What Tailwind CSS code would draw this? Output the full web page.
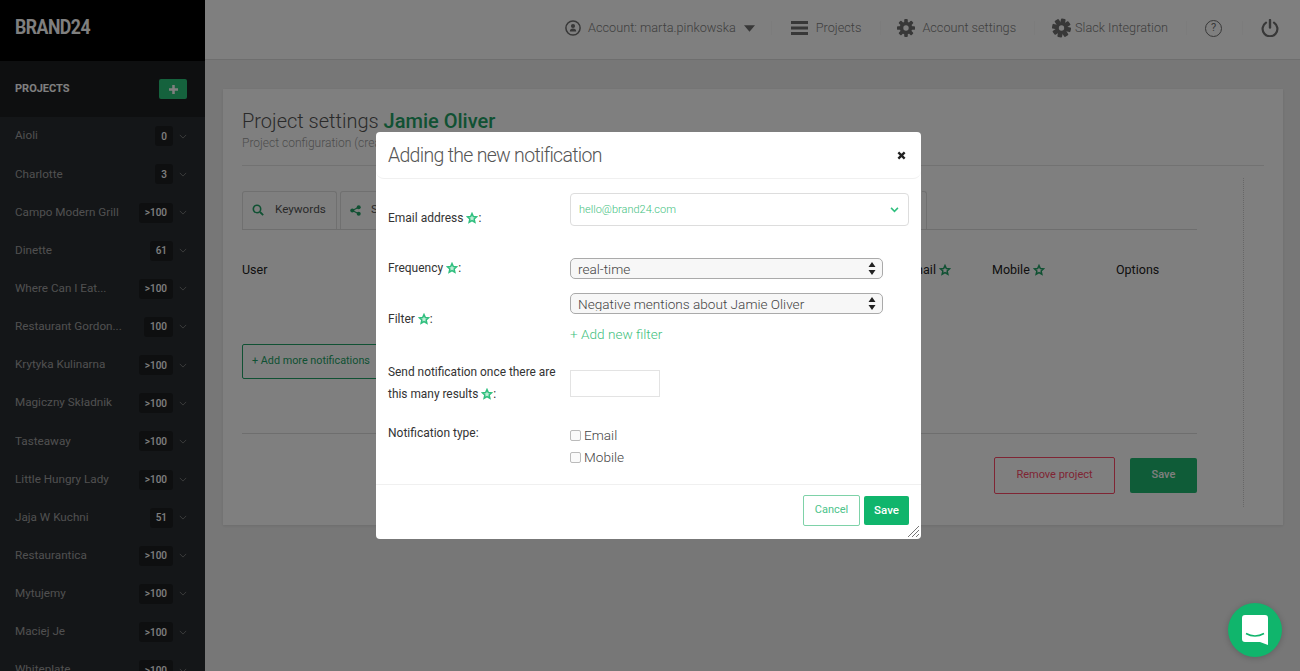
<!DOCTYPE html>
<html lang="en">
<head>
<meta charset="utf-8">
<title>Brand24</title>
<script src="https://cdn.jsdelivr.net/npm/@tailwindcss/browser@4"></script>
</head>
<body class="m-0 overflow-hidden">
<div class="relative flex h-[671px] w-[1300px] overflow-hidden bg-[#efefef] font-['Roboto','Liberation_Sans',sans-serif]">
  <!-- sidebar -->
  <aside class="flex h-full w-[205px] shrink-0 flex-col overflow-hidden bg-[#282c30]">
    <div class="flex h-[61px] shrink-0 items-center bg-black pl-[15px] pb-[5px]"><span class="inline-block origin-left scale-x-[0.84] text-[21px] font-bold tracking-[-0.6px] text-white">BRAND24</span></div>
    <div class="flex h-[56.2px] shrink-0 items-center justify-between bg-[#1c1e20] pl-[15px] pr-[18px]">
      <span class="text-[11px] font-bold text-white">PROJECTS</span>
      <span class="flex h-[20px] w-[28px] items-center justify-center rounded-[2px] bg-[#2bc47a]">
        <svg viewBox="0 0 10 10" class="h-[9px] w-[9px]"><path d="M3.6 0h2.8v3.6H10v2.8H6.4V10H3.6V6.4H0V3.6h3.6z" fill="#fff"/></svg>
      </span>
    </div>
    <ul class="m-0 list-none p-0 text-[11.7px] text-[#a0a0a0]">
      <li class="flex h-[38.15px] items-center pl-[15px] pr-[18px]"><span class="flex-1 truncate">Aioli</span><b class="flex h-[20px] min-w-[18px] items-center justify-center rounded-[3px] bg-[#1c1e20] px-[6px] text-[10px] font-medium text-white">0</b><svg viewBox="0 0 10 6" class="ml-[6px] h-[5px] w-[8px]"><path d="M1 1l4 4 4-4" fill="none" stroke="#888" stroke-width="1"/></svg></li>
      <li class="flex h-[38.15px] items-center pl-[15px] pr-[18px]"><span class="flex-1 truncate">Charlotte</span><b class="flex h-[20px] min-w-[18px] items-center justify-center rounded-[3px] bg-[#1c1e20] px-[6px] text-[10px] font-medium text-white">3</b><svg viewBox="0 0 10 6" class="ml-[6px] h-[5px] w-[8px]"><path d="M1 1l4 4 4-4" fill="none" stroke="#888" stroke-width="1"/></svg></li>
      <li class="flex h-[38.15px] items-center pl-[15px] pr-[18px]"><span class="flex-1 truncate">Campo Modern Grill</span><b class="flex h-[20px] min-w-[18px] items-center justify-center rounded-[3px] bg-[#1c1e20] px-[6px] text-[10px] font-medium text-white">&gt;100</b><svg viewBox="0 0 10 6" class="ml-[6px] h-[5px] w-[8px]"><path d="M1 1l4 4 4-4" fill="none" stroke="#888" stroke-width="1"/></svg></li>
      <li class="flex h-[38.15px] items-center pl-[15px] pr-[18px]"><span class="flex-1 truncate">Dinette</span><b class="flex h-[20px] min-w-[18px] items-center justify-center rounded-[3px] bg-[#1c1e20] px-[6px] text-[10px] font-medium text-white">61</b><svg viewBox="0 0 10 6" class="ml-[6px] h-[5px] w-[8px]"><path d="M1 1l4 4 4-4" fill="none" stroke="#888" stroke-width="1"/></svg></li>
      <li class="flex h-[38.15px] items-center pl-[15px] pr-[18px]"><span class="flex-1 truncate">Where Can I Eat...</span><b class="flex h-[20px] min-w-[18px] items-center justify-center rounded-[3px] bg-[#1c1e20] px-[6px] text-[10px] font-medium text-white">&gt;100</b><svg viewBox="0 0 10 6" class="ml-[6px] h-[5px] w-[8px]"><path d="M1 1l4 4 4-4" fill="none" stroke="#888" stroke-width="1"/></svg></li>
      <li class="flex h-[38.15px] items-center pl-[15px] pr-[18px]"><span class="flex-1 truncate">Restaurant Gordon...</span><b class="flex h-[20px] min-w-[18px] items-center justify-center rounded-[3px] bg-[#1c1e20] px-[6px] text-[10px] font-medium text-white">100</b><svg viewBox="0 0 10 6" class="ml-[6px] h-[5px] w-[8px]"><path d="M1 1l4 4 4-4" fill="none" stroke="#888" stroke-width="1"/></svg></li>
      <li class="flex h-[38.15px] items-center pl-[15px] pr-[18px]"><span class="flex-1 truncate">Krytyka Kulinarna</span><b class="flex h-[20px] min-w-[18px] items-center justify-center rounded-[3px] bg-[#1c1e20] px-[6px] text-[10px] font-medium text-white">&gt;100</b><svg viewBox="0 0 10 6" class="ml-[6px] h-[5px] w-[8px]"><path d="M1 1l4 4 4-4" fill="none" stroke="#888" stroke-width="1"/></svg></li>
      <li class="flex h-[38.15px] items-center pl-[15px] pr-[18px]"><span class="flex-1 truncate">Magiczny Składnik</span><b class="flex h-[20px] min-w-[18px] items-center justify-center rounded-[3px] bg-[#1c1e20] px-[6px] text-[10px] font-medium text-white">&gt;100</b><svg viewBox="0 0 10 6" class="ml-[6px] h-[5px] w-[8px]"><path d="M1 1l4 4 4-4" fill="none" stroke="#888" stroke-width="1"/></svg></li>
      <li class="flex h-[38.15px] items-center pl-[15px] pr-[18px]"><span class="flex-1 truncate">Tasteaway</span><b class="flex h-[20px] min-w-[18px] items-center justify-center rounded-[3px] bg-[#1c1e20] px-[6px] text-[10px] font-medium text-white">&gt;100</b><svg viewBox="0 0 10 6" class="ml-[6px] h-[5px] w-[8px]"><path d="M1 1l4 4 4-4" fill="none" stroke="#888" stroke-width="1"/></svg></li>
      <li class="flex h-[38.15px] items-center pl-[15px] pr-[18px]"><span class="flex-1 truncate">Little Hungry Lady</span><b class="flex h-[20px] min-w-[18px] items-center justify-center rounded-[3px] bg-[#1c1e20] px-[6px] text-[10px] font-medium text-white">&gt;100</b><svg viewBox="0 0 10 6" class="ml-[6px] h-[5px] w-[8px]"><path d="M1 1l4 4 4-4" fill="none" stroke="#888" stroke-width="1"/></svg></li>
      <li class="flex h-[38.15px] items-center pl-[15px] pr-[18px]"><span class="flex-1 truncate">Jaja W Kuchni</span><b class="flex h-[20px] min-w-[18px] items-center justify-center rounded-[3px] bg-[#1c1e20] px-[6px] text-[10px] font-medium text-white">51</b><svg viewBox="0 0 10 6" class="ml-[6px] h-[5px] w-[8px]"><path d="M1 1l4 4 4-4" fill="none" stroke="#888" stroke-width="1"/></svg></li>
      <li class="flex h-[38.15px] items-center pl-[15px] pr-[18px]"><span class="flex-1 truncate">Restaurantica</span><b class="flex h-[20px] min-w-[18px] items-center justify-center rounded-[3px] bg-[#1c1e20] px-[6px] text-[10px] font-medium text-white">&gt;100</b><svg viewBox="0 0 10 6" class="ml-[6px] h-[5px] w-[8px]"><path d="M1 1l4 4 4-4" fill="none" stroke="#888" stroke-width="1"/></svg></li>
      <li class="flex h-[38.15px] items-center pl-[15px] pr-[18px]"><span class="flex-1 truncate">Mytujemy</span><b class="flex h-[20px] min-w-[18px] items-center justify-center rounded-[3px] bg-[#1c1e20] px-[6px] text-[10px] font-medium text-white">&gt;100</b><svg viewBox="0 0 10 6" class="ml-[6px] h-[5px] w-[8px]"><path d="M1 1l4 4 4-4" fill="none" stroke="#888" stroke-width="1"/></svg></li>
      <li class="flex h-[38.15px] items-center pl-[15px] pr-[18px]"><span class="flex-1 truncate">Maciej Je</span><b class="flex h-[20px] min-w-[18px] items-center justify-center rounded-[3px] bg-[#1c1e20] px-[6px] text-[10px] font-medium text-white">&gt;100</b><svg viewBox="0 0 10 6" class="ml-[6px] h-[5px] w-[8px]"><path d="M1 1l4 4 4-4" fill="none" stroke="#888" stroke-width="1"/></svg></li>
      <li class="flex h-[38.15px] items-center pl-[15px] pr-[18px]"><span class="flex-1 truncate">Whiteplate</span><b class="flex h-[20px] min-w-[18px] items-center justify-center rounded-[3px] bg-[#1c1e20] px-[6px] text-[10px] font-medium text-white">&gt;100</b><svg viewBox="0 0 10 6" class="ml-[6px] h-[5px] w-[8px]"><path d="M1 1l4 4 4-4" fill="none" stroke="#888" stroke-width="1"/></svg></li>
    </ul>
  </aside>

  <!-- main -->
  <div class="flex min-w-0 flex-1 flex-col">
    <header class="flex h-[60px] shrink-0 items-center justify-end border-b border-[#dcdcdc] bg-white pr-[21px] pb-[3px] text-[12.7px] font-light text-[#808080]">
      <svg viewBox="0 0 16 16" class="h-[16px] w-[16px] shrink-0"><circle cx="8" cy="8" r="7.1" fill="none" stroke="#707070" stroke-width="1.5"/><circle cx="8" cy="6" r="2.1" fill="#707070"/><path d="M4.8 11.6c0-2.200 1.200-3.200 3.200-3.200s3.200 1 3.200 3.200z" fill="#707070"/></svg>
      <span class="ml-[7px]">Account: marta.pinkowska</span>
      <svg viewBox="0 0 12 7" class="ml-[8px] h-[7px] w-[11px] shrink-0"><path d="M0 0h12L6 7z" fill="#707070"/></svg>
      <span class="ml-[16px] h-[14px] w-px bg-[#f8f8f8]"></span>
      <svg viewBox="0 0 17 14" class="ml-[19px] h-[14px] w-[17px] shrink-0"><path d="M0 0h17v3H0zM0 5.500h17v3H0zM0 11h17v3H0z" fill="#707070"/></svg>
      <span class="ml-[8px]">Projects</span>
      <span class="ml-[19px] h-[14px] w-px bg-[#f8f8f8]"></span>
      <svg viewBox="0 0 20 20" class="ml-[16px] h-[18px] w-[18px] shrink-0"><g fill="#707070"><rect x="8" y="0" width="4" height="20" rx="1"/><rect x="8" y="0" width="4" height="20" rx="1" transform="rotate(45 10 10)"/><rect x="8" y="0" width="4" height="20" rx="1" transform="rotate(90 10 10)"/><rect x="8" y="0" width="4" height="20" rx="1" transform="rotate(135 10 10)"/></g><circle cx="10" cy="10" r="5.500" fill="none" stroke="#707070" stroke-width="3"/><circle cx="10" cy="10" r="3" fill="#fff"/></svg>
      <span class="ml-[7px]">Account settings</span>
      <span class="ml-[18px] h-[14px] w-px bg-[#f8f8f8]"></span>
      <svg viewBox="0 0 20 20" class="ml-[17px] h-[20px] w-[19px] shrink-0"><g fill="#707070" transform="rotate(12 10 10)"><rect x="7.500" y="0" width="5" height="20" rx="1"/><rect x="7.500" y="0" width="5" height="20" rx="1" transform="rotate(45 10 10)"/><rect x="7.500" y="0" width="5" height="20" rx="1" transform="rotate(90 10 10)"/><rect x="7.500" y="0" width="5" height="20" rx="1" transform="rotate(135 10 10)"/></g><circle cx="10" cy="10" r="2.800" fill="#fff"/></svg>
      <span class="ml-[4px]">Slack Integration</span>
      <span class="ml-[18px] h-[14px] w-px bg-[#f8f8f8]"></span>
      <span class="ml-[18px] flex h-[17px] w-[17px] shrink-0 items-center justify-center rounded-full border-[1.5px] border-[#707070] text-[11px] font-normal text-[#707070]">?</span>
      <span class="ml-[20px] h-[14px] w-px bg-[#f8f8f8]"></span>
      <svg viewBox="0 0 18 18" class="ml-[18px] h-[18px] w-[18px] shrink-0"><path d="M5 3.600a7.400 7.400 0 1 0 8 0" fill="none" stroke="#707070" stroke-width="2.200" stroke-linecap="round"/><path d="M9 1v7.500" fill="none" stroke="#707070" stroke-width="2.400" stroke-linecap="round"/></svg>
    </header>

    <main class="flex-1 pt-[29px] pl-[18px] pr-[17px]">
      <section class="flex h-[436px] flex-col bg-white pl-[19px] pr-[19px] shadow-[0_1px_3px_rgba(0,0,0,0.1)]">
        <h1 class="m-0 mt-[19px] text-[20px] leading-[27px] font-light text-[#555]">Project settings <span class="font-medium text-[#21a366]">Jamie Oliver</span></h1>
        <p class="m-0 text-[12px] leading-[16px] font-light text-[#999]">Project configuration (created on Jamie Oliver)</p>
        <div class="mt-[14px] border-t border-[#e4e4e4]"></div>
        <div class="flex min-h-0 flex-1">
          <div class="w-[955px] shrink-0">
            <div class="mt-[25px] flex h-[39px] gap-[3px] border-b border-[#dcdcdc]">
              <div class="flex w-[95px] items-center gap-[11px] rounded-t-[3px] border border-b-0 border-[#e0e0e0] pb-[1px] pl-[9px] text-[11.700px] text-[#555]">
                <svg viewBox="0 0 12 12" class="h-[12px] w-[12px]"><circle cx="5" cy="5" r="3.700" fill="none" stroke="#21a366" stroke-width="1.600"/><path d="M8 8l3.200 3.200" stroke="#21a366" stroke-width="1.800"/></svg>
                Keywords
              </div>
              <div class="flex w-[120px] items-center gap-[10px] rounded-t-[3px] border border-b-0 border-[#e0e0e0] pb-[1px] pl-[9px] text-[11.700px] text-[#555]">
                <svg viewBox="0 0 12 12" class="h-[11px] w-[11px]"><circle cx="2.500" cy="6" r="2.200" fill="#21a366"/><circle cx="9.500" cy="2.500" r="2.200" fill="#21a366"/><circle cx="9.500" cy="9.500" r="2.200" fill="#21a366"/><path d="M2.500 6l7-3.500M2.500 6l7 3.500" stroke="#21a366" stroke-width="1.200"/></svg>
                Sources
              </div>
              <div class="ml-[455px] w-[1px]"></div>
              <div class="w-[5px] self-stretch rounded-tr-[3px] border-t border-r border-[#e0e0e0]"></div>
            </div>
            <div class="relative mt-[31px] flex h-[18px] items-center text-[12.500px] text-[#222]">
              <span class="w-[660px]">User</span>
              <span class="flex w-[90px] items-center gap-[3px] pl-[3px]">Email <svg viewBox="0 0 24 24" class="h-[12px] w-[12px]"><path d="M12 3l2.700 6 6.500.7-4.900 4.400 1.400 6.400-5.700-3.300-5.700 3.300 1.400-6.400-4.900-4.400 6.500-.7z" fill="none" stroke="#21a366" stroke-width="3"/></svg></span>
              <span class="flex w-[124px] items-center gap-[3px]">Mobile <svg viewBox="0 0 24 24" class="h-[12px] w-[12px]"><path d="M12 3l2.700 6 6.500.7-4.900 4.400 1.400 6.400-5.700-3.300-5.700 3.300 1.400-6.400-4.900-4.400 6.500-.7z" fill="none" stroke="#21a366" stroke-width="3"/></svg></span>
              <span>Options</span>
            </div>
            <div class="mt-[65px] flex h-[35px] w-[140px] items-center rounded-[2px] border border-[#21a366] pl-[9px] text-[10.800px] text-[#21a366]">+ Add more notifications</div>
            <div class="mt-[54px] border-t border-[#dcdcdc]"></div>
            <div class="mt-[23px] flex justify-end gap-[15px]">
              <span class="flex h-[37px] w-[121px] items-center justify-center rounded-[2px] border border-[#ff4a68] text-[11px] text-[#ff4a68]">Remove project</span>
              <span class="mt-[1px] flex h-[35px] w-[67px] items-center justify-center rounded-[2px] bg-[#1fb870] text-[11px] font-medium text-white">Save</span>
            </div>
          </div>
          <div class="ml-[46px] mt-[12px] mb-[18px] border-l border-dotted border-[#cfcfcf]"></div>
        </div>
      </section>
    </main>
  </div>

  <!-- dim -->
  <div class="absolute inset-0 bg-black opacity-50"></div>

  <!-- modal -->
  <div class="absolute left-[376px] top-[132px] flex h-[407px] w-[545px] flex-col rounded-[4px] bg-white text-[#333]">
    <div class="flex h-[47px] shrink-0 items-center justify-between rounded-b-[8px] border-b border-[#f0f0f0] pt-[1px] pl-[12px] pr-[15px]">
      <h2 class="m-0 text-[19.500px] font-light tracking-[-0.7px] text-[#555]">Adding the new notification</h2>
      <svg viewBox="0 0 10 10" class="h-[9px] w-[9px]"><path d="M1.500 1.500l7 7M8.500 1.500l-7 7" stroke="#222" stroke-width="2.600"/></svg>
    </div>
    <div class="grid flex-1 grid-cols-[182px_1fr] content-start pl-[12px] pr-[12px] text-[12px] font-normal">
      <label class="flex h-[79px] items-start pt-[30px]"><span class="flex items-center">Email address&nbsp;<svg viewBox="0 0 24 24" class="h-[12px] w-[12px]"><path d="M12 3l2.700 6 6.500.7-4.900 4.400 1.400 6.400-5.700-3.300-5.700 3.300 1.400-6.400-4.900-4.400 6.500-.7z" fill="#bfeed6" stroke="#2fbf7e" stroke-width="3"/></svg>:</span></label>
      <div class="pt-[14px]">
        <div class="flex h-[33px] items-center justify-between rounded-[4px] border border-[#ddd] pt-[1px] pl-[8px] pr-[9px] text-[11px] font-light text-[#3fbf80]">hello@brand24.com
          <svg viewBox="0 0 10 7" class="h-[6px] w-[9px]"><path d="M1 1l4 4 4-4" fill="none" stroke="#2fbf7e" stroke-width="1.800"/></svg>
        </div>
      </div>

      <label class="flex h-[35px] items-start pt-[1px]"><span class="flex items-center">Frequency&nbsp;<svg viewBox="0 0 24 24" class="h-[12px] w-[12px]"><path d="M12 3l2.700 6 6.500.7-4.900 4.400 1.400 6.400-5.700-3.300-5.700 3.300 1.400-6.400-4.900-4.400 6.500-.7z" fill="#bfeed6" stroke="#2fbf7e" stroke-width="3"/></svg>:</span></label>
      <div>
        <div class="relative h-[21px] w-[313px]">
          <select class="h-full w-full appearance-none rounded-[5px] border border-[#aaa] bg-[#f7f7f7] pl-[7px] pb-[2px] text-[13.600px] font-light text-[#444]"><option>real-time</option></select>
          <svg viewBox="0 0 8 13" class="absolute right-[7px] top-[4px] h-[13px] w-[8px]"><path d="M4 0l3.500 5h-7zM4 13L.5 8h7z" fill="#222"/></svg>
        </div>
      </div>

      <label class="flex h-[77px] items-start pt-[17px]"><span class="flex items-center">Filter&nbsp;<svg viewBox="0 0 24 24" class="h-[12px] w-[12px]"><path d="M12 3l2.700 6 6.500.7-4.900 4.400 1.400 6.400-5.700-3.300-5.700 3.300 1.400-6.400-4.900-4.400 6.500-.7z" fill="#bfeed6" stroke="#2fbf7e" stroke-width="3"/></svg>:</span></label>
      <div>
        <div class="relative h-[21px] w-[313px]">
          <select class="h-full w-full appearance-none rounded-[5px] border border-[#aaa] bg-[#f7f7f7] pl-[7px] pb-[2px] text-[13.600px] font-light text-[#444]"><option>Negative mentions about Jamie Oliver</option></select>
          <svg viewBox="0 0 8 13" class="absolute right-[7px] top-[4px] h-[13px] w-[8px]"><path d="M4 0l3.500 5h-7zM4 13L.5 8h7z" fill="#222"/></svg>
        </div>
        <div class="mt-[12px] text-[13.600px] leading-[17px] font-light text-[#3fbf80]">+ Add new filter</div>
      </div>

      <label class="-mt-[9px] h-[71px] text-[11.900px] leading-[22px]">Send notification once there are<br><span class="inline-flex items-center">this many results&nbsp;<svg viewBox="0 0 24 24" class="h-[12px] w-[12px]"><path d="M12 3l2.700 6 6.500.7-4.900 4.400 1.400 6.400-5.700-3.300-5.700 3.300 1.400-6.400-4.900-4.400 6.500-.7z" fill="#bfeed6" stroke="#2fbf7e" stroke-width="3"/></svg>:</span></label>
      <div><input type="text" class="h-[27px] w-[90px] border border-[#e3e3e3] bg-white"></div>

      <label class="-mt-[8px] h-[60px]">Notification type:</label>
      <div class="-mt-[8px] text-[13.600px] leading-[22px] font-light text-[#444]">
        <div class="flex items-center gap-[3px]"><span class="h-[11px] w-[11px] rounded-[2px] border border-[#bbb] bg-[#fafafa]"></span>Email</div>
        <div class="flex items-center gap-[3px]"><span class="h-[11px] w-[11px] rounded-[2px] border border-[#bbb] bg-[#fafafa]"></span>Mobile</div>
      </div>
    </div>
    <div class="relative flex h-[55px] shrink-0 items-start justify-end gap-[4px] border-t border-[#f0f0f0] pt-[10px] pr-[12px]">
      <span class="flex h-[31px] w-[57px] items-center justify-center rounded-[2px] border border-[#7ed2a8] text-[11px] text-[#4cc38a]">Cancel</span>
      <span class="mt-[1px] flex h-[29px] w-[45px] items-center justify-center rounded-[2px] bg-[#10b56c] pt-[1px] text-[11.500px] font-medium text-white">Save</span>
      <svg viewBox="0 0 11 11" class="absolute bottom-[2px] right-[2px] h-[11px] w-[11px]"><path d="M0 11L11 0M4 11l7-7M8 11l3-3" stroke="#777" stroke-width="1"/></svg>
    </div>
  </div>

  <!-- chat launcher -->
  <div class="absolute left-[1228px] top-[603px] flex h-[54px] w-[54px] items-center justify-center rounded-full bg-[#10b56c] shadow-[0_1px_6px_rgba(0,0,0,0.2)]">
    <svg viewBox="0 0 26 30" class="h-[30px] w-[26px]"><path d="M3 0h20a3 3 0 0 1 3 3v27l-8-3H3a3 3 0 0 1-3-3V3a3 3 0 0 1 3-3z" fill="#fff"/><path d="M4 18.500c5.500 3 12.500 3 18 0" fill="none" stroke="#10b56c" stroke-width="1.500"/></svg>
  </div>
</div>
</body>
</html>
